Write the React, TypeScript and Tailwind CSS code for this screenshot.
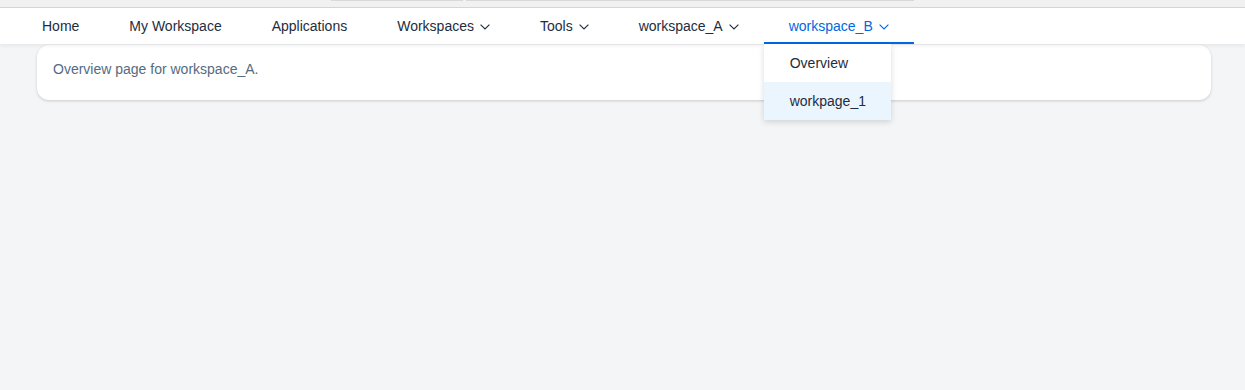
const navItems = [
  { label: 'Home' },
  { label: 'My Workspace' },
  { label: 'Applications' },
  { label: 'Workspaces', menu: true },
  { label: 'Tools', menu: true },
  { label: 'workspace_A', menu: true },
  { label: 'workspace_B', menu: true, active: true },
]

function Chevron({ className }: { className?: string }) {
  return (
    <svg width="10" height="6" viewBox="0 0 10 6" fill="none" className={className}>
      <path d="M0.6 0.6 L5 5 L9.4 0.6" stroke="currentColor" strokeWidth="1.1" />
    </svg>
  )
}

export default function App() {
  return (
    <div className="relative h-[390px] w-[1245px] overflow-hidden bg-[#f4f5f7] font-['Liberation_Sans',Arial,sans-serif]">
      {/* browser-ish strip on top */}
      <div className="relative h-[8px] border-b border-[#d6d6d6] bg-[#f1f1f1]">
        <div className="absolute left-[331px] top-0 h-px w-[132px] bg-[#d9d9d9]" />
        <div className="absolute left-[466px] top-0 h-px w-[448px] bg-[#d9d9d9]" />
      </div>

      <nav className="relative z-10 flex h-[36px] items-stretch bg-white pl-[17px] shadow-[0_2px_4px_rgba(0,0,0,0.06)]">
        {navItems.map((item) => (
          <div key={item.label} className="relative flex items-stretch">
            <div
              className={`flex items-center gap-[6px] px-[25px] text-[14px] ${item.active ? 'text-[#0068e0]' : 'text-[#1d2d3e]'}`}
            >
              <span>{item.label}</span>
              {item.menu && <Chevron className="mt-[1px]" />}
            </div>
            {item.active && (
              <>
                <div className="absolute inset-x-0 bottom-0 h-[2px] bg-[#0068e0]" />
                <div className="absolute left-0 top-[36px] w-[127px] bg-white text-[14px] text-[#1d2d3e] shadow-[0_2px_6px_rgba(0,0,0,0.15)]">
                  <div className="flex h-[38px] items-center px-[26px]">Overview</div>
                  <div className="flex h-[38px] items-center bg-[#ebf5fe] px-[26px]">workpage_1</div>
                </div>
              </>
            )}
          </div>
        ))}
      </nav>

      <div className="mx-[37px] mt-[1px] w-[1174px] rounded-[12px] bg-white px-[16px] pt-[14px] pb-[21px] shadow-[0_1px_3px_rgba(0,0,0,0.18)]">
        <p className="text-[14px] leading-[20px] text-[#556b82]">Overview page for workspace_A.</p>
      </div>
    </div>
  )
}
